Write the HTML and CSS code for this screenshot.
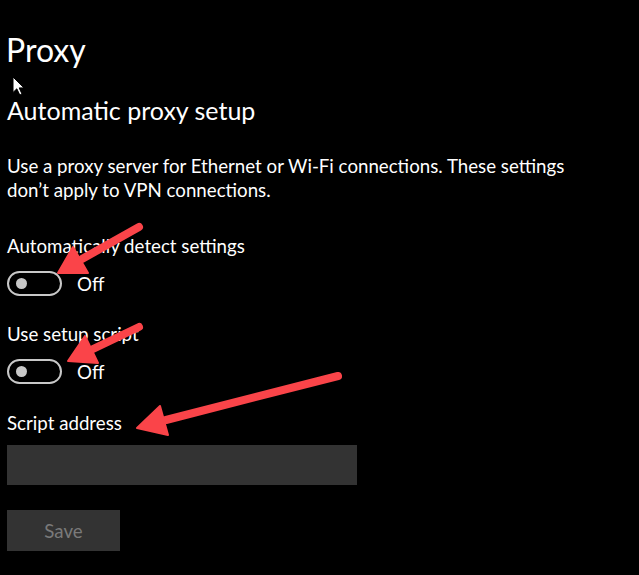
FILE: index.html
```html
<!DOCTYPE html>
<html lang="en">
<head>
<meta charset="UTF-8">
<meta name="viewport" content="width=device-width, initial-scale=1.0">
<title>Proxy</title>
<link rel="stylesheet" href="styles.css">
</head>
<body>

<div class="page">
    <h1 class="title">Proxy</h1>
    <h2 class="subtitle">Automatic proxy setup</h2>

    <p class="intro">Use a proxy server for Ethernet or Wi-Fi connections. These settings<br>don’t apply to VPN connections.</p>

    <div class="label label-first">Automatically detect settings</div>
    <div class="toggle-row">
        <span class="toggle"><span class="knob"></span></span>
        <span class="state">Off</span>
    </div>

    <div class="label">Use setup script</div>
    <div class="toggle-row">
        <span class="toggle"><span class="knob"></span></span>
        <span class="state">Off</span>
    </div>

    <div class="label label-address">Script address</div>
    <div class="textbox"></div>

    <button class="save" type="button">Save</button>

    <!-- cursor and annotation arrows sit on top of the page -->
    <svg class="cursor" width="14" height="20" viewBox="0 0 14 20">
        <path d="M1 1 L1 16.5 L4.8 12.8 L7.8 19 L10 18 L7.2 11.9 L12 11.9 Z" fill="#fff" stroke="#000" stroke-width="1"/>
    </svg>

    <svg class="arrows" width="639" height="575" viewBox="0 0 639 575">
        <g fill="#fa4449" stroke="#fa4449" stroke-linecap="round" stroke-linejoin="round">
            <line x1="139" y1="227" x2="82" y2="259" stroke-width="8"/>
            <polygon points="58,273 88,273 73,247" stroke-width="2"/>

            <line x1="139" y1="327" x2="93" y2="349" stroke-width="8"/>
            <polygon points="68,361 98,363 85,336" stroke-width="2"/>

            <line x1="338" y1="376" x2="166" y2="420" stroke-width="8"/>
            <polygon points="137,428 168,435 160,406" stroke-width="2"/>
        </g>
    </svg>
</div>

</body>
</html>
```

FILE: styles.css
```css
body {
    margin: 0;
    padding: 0;
    background-color: #000;
    color: #fff;
    font-family: Lato, 'Open Sans', sans-serif;
}
.page {
    position: relative;
    width: 639px;
    height: 575px;
    padding: 28px 0 0 7px;
    box-sizing: border-box;
    overflow: hidden;
}
.title {
    margin: 0 0 0 -1px;
    font-size: 32px;
    line-height: 44px;
    font-weight: 400;
}
.subtitle {
    margin: 22px 0 0 0;
    font-size: 25px;
    line-height: 32px;
    font-weight: 400;
}
.intro {
    margin: 28px 0 0 0;
    font-size: 18.7px;
    line-height: 24px;
}
.label {
    margin-top: 26px;
    font-size: 18.7px;
    line-height: 24px;
}
.label-first {
    margin-top: 32px;
}
.label-address {
    margin-top: 27px;
}
.toggle-row {
    display: flex;
    align-items: center;
    gap: 15px;
    margin-top: 13px;
    height: 25px;
}
.toggle {
    display: flex;
    align-items: center;
    width: 55px;
    height: 25px;
    box-sizing: border-box;
    border: 2px solid #c8c8c8;
    border-radius: 13px;
    padding-left: 7px;
}
.knob {
    width: 11px;
    height: 11px;
    border-radius: 50%;
    background-color: #c8c8c8;
}
.state {
    font-size: 18.7px;
    line-height: 24px;
}
.textbox {
    margin-top: 10px;
    width: 350px;
    height: 40px;
    background-color: #333;
}
.save {
    display: block;
    margin-top: 25px;
    width: 113px;
    height: 41px;
    border: none;
    padding: 0;
    background-color: #333;
    color: #7a7a7a;
    font-family: Lato, 'Open Sans', sans-serif;
    font-size: 18.7px;
}
.cursor {
    position: absolute;
    left: 12px;
    top: 76px;
}
.arrows {
    position: absolute;
    left: 0;
    top: 0;
    pointer-events: none;
}
```
